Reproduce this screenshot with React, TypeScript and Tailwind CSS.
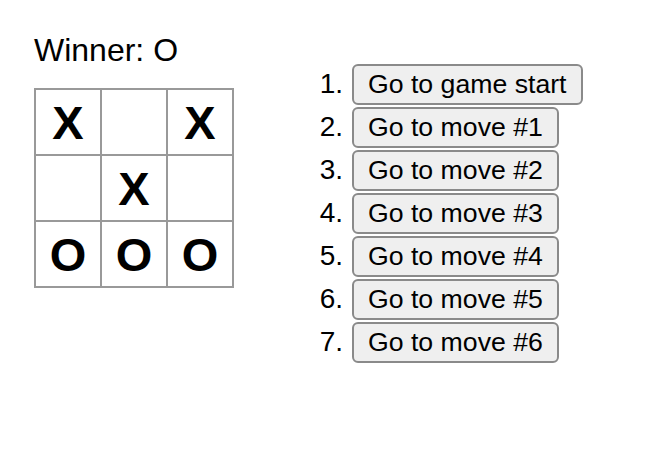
import React from 'react';

const squares: (string | null)[] = ['X', null, 'X', null, 'X', null, 'O', 'O', 'O'];
const moves = ['Go to game start', 'Go to move #1', 'Go to move #2', 'Go to move #3', 'Go to move #4', 'Go to move #5', 'Go to move #6'];

const Square: React.FC<{ value: string | null }> = ({ value }) => (
  <button className="w-[68px] h-[68px] -mr-[2px] -mb-[2px] border-2 border-[#999] bg-white flex items-center justify-center text-[47px] font-bold leading-none p-0">
    {value}
  </button>
);

const App: React.FC = () => {
  return (
    <div className="min-h-[471px] bg-white text-black pt-[32px] pl-[34px] flex" style={{ fontFamily: '"Liberation Sans", Arial, sans-serif' }}>
      <div>
        <div className="text-[32px] leading-[36px] mb-[20px]">Winner: O</div>
        <div>
          {[0, 1, 2].map(row => (
            <div key={row} className="flex">
              {[0, 1, 2].map(col => (
                <Square key={col} value={squares[row * 3 + col]} />
              ))}
            </div>
          ))}
        </div>
      </div>
      <ol className="ml-[75px] mt-[32px] flex flex-col gap-[2px]">
        {moves.map((label, i) => (
          <li key={i} className="flex items-baseline">
            <span className="w-[36px] text-right text-[28px] leading-[32px]">{i + 1}.</span>
            <button className="ml-[9px] px-[14px] py-[3px] border-2 border-[#8a8a8a] rounded-[6px] bg-[#efefef] text-[26.67px] leading-[31px]">
              {label}
            </button>
          </li>
        ))}
      </ol>
    </div>
  );
};

export default App;
